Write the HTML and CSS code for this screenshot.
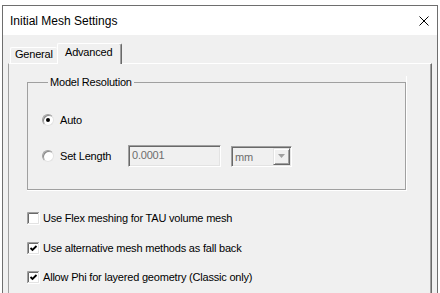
FILE: index.html
```html
<!DOCTYPE html>
<html lang="en">
<head>
    <meta charset="UTF-8">
    <title>Initial Mesh Settings</title>
    <link rel="stylesheet" href="styles.css">
</head>
<body>

    <div class="window">
        <div class="titlebar">
            <span class="title">Initial Mesh Settings</span>
            <svg class="close" width="10" height="10" viewBox="0 0 10 10">
                <path d="M0.5 0.5 L9.5 9.5 M9.5 0.5 L0.5 9.5" stroke="#000" stroke-width="1" fill="none"/>
            </svg>
        </div>

        <div class="client">
            <!-- Tabs -->
            <div class="tabs">
                <div class="tab tab-general">General</div>
                <div class="tab tab-advanced">Advanced</div>
            </div>

            <div class="panel">
                <div class="group-wrap">
                    <fieldset class="group">
                        <legend>Model Resolution</legend>
                        <div class="option">
                            <span class="radio on"></span>
                            <span class="option-label">Auto</span>
                        </div>
                        <div class="option option-length">
                            <span class="radio"></span>
                            <span class="option-label label-length">Set Length</span>
                            <div class="field">0.0001</div>
                            <div class="combo">
                                <span class="combo-text">mm</span>
                                <span class="combo-btn">
                                    <svg width="7" height="4" viewBox="0 0 7 4"><path d="M0 0 H7 L3.5 4 Z" fill="#a0a0a0"/></svg>
                                </span>
                            </div>
                        </div>
                    </fieldset>
                </div>

                <!-- Options -->
                <div class="check check-flex">
                    <svg class="box" width="13" height="13" viewBox="0 0 13 13">
                        <rect x="2" y="2" width="9" height="9" fill="#fff"/>
                        <path d="M0.5 12 V0.5 H12" stroke="#a0a0a0" fill="none"/>
                        <path d="M0.5 12.5 H12.5 V0.5" stroke="#fff" fill="none"/>
                        <path d="M1.5 11 V1.5 H11" stroke="#696969" fill="none"/>
                        <path d="M1.5 11.5 H11.5 V1.5" stroke="#e3e3e3" fill="none"/>
                    </svg>
                    <span>Use Flex meshing for TAU volume mesh</span>
                </div>
                <div class="check check-alt">
                    <svg class="box" width="13" height="13" viewBox="0 0 13 13">
                        <rect x="2" y="2" width="9" height="9" fill="#fff"/>
                        <path d="M0.5 12 V0.5 H12" stroke="#a0a0a0" fill="none"/>
                        <path d="M0.5 12.5 H12.5 V0.5" stroke="#fff" fill="none"/>
                        <path d="M1.5 11 V1.5 H11" stroke="#696969" fill="none"/>
                        <path d="M1.5 11.5 H11.5 V1.5" stroke="#e3e3e3" fill="none"/>
                        <path d="M3.5 6 L5.5 8 L9.5 4" stroke="#000" stroke-width="1.8" fill="none"/>
                    </svg>
                    <span>Use alternative mesh methods as fall back</span>
                </div>
                <div class="check check-phi">
                    <svg class="box" width="13" height="13" viewBox="0 0 13 13">
                        <rect x="2" y="2" width="9" height="9" fill="#fff"/>
                        <path d="M0.5 12 V0.5 H12" stroke="#a0a0a0" fill="none"/>
                        <path d="M0.5 12.5 H12.5 V0.5" stroke="#fff" fill="none"/>
                        <path d="M1.5 11 V1.5 H11" stroke="#696969" fill="none"/>
                        <path d="M1.5 11.5 H11.5 V1.5" stroke="#e3e3e3" fill="none"/>
                        <path d="M3.5 6 L5.5 8 L9.5 4" stroke="#000" stroke-width="1.8" fill="none"/>
                    </svg>
                    <span>Allow Phi for layered geometry (Classic only)</span>
                </div>
            </div>
        </div>
    </div>

</body>
</html>
```

FILE: styles.css
```css
/* Basic reset */
* {
    margin: 0;
    padding: 0;
    box-sizing: border-box;
}

body {
    background-color: #fff;
    font-family: "Liberation Sans", Arial, sans-serif;
    font-size: 11px;
    letter-spacing: -0.2px;
    color: #000;
    overflow: hidden;
}

/* Dialog window */
.window {
    margin: 5px 0 0 2px;
    width: 436px;
    height: 288px;
    border: 1px solid #6e6e6e;
    border-bottom: none;
    display: flex;
    flex-direction: column;
}

.titlebar {
    height: 29px;
    flex: none;
    background-color: #fff;
    display: flex;
    align-items: center;
    justify-content: space-between;
    padding: 0 8px 0 7px;
}

.title {
    font-size: 12px;
    letter-spacing: 0;
}

.client {
    flex: 1;
    background-color: #f0f0f0;
    padding: 8px 5px 0;
    display: flex;
    flex-direction: column;
}

/* Tabs */
.tabs {
    display: flex;
    align-items: flex-start;
    height: 21px;
    margin-bottom: -1px;
    padding-left: 2px;
    position: relative;
    z-index: 1;
}

.tab {
    background-color: #f0f0f0;
    border-top: 1px solid #fff;
    border-left: 1px solid #fff;
    border-radius: 2px 2px 0 0;
    line-height: 13px;
    white-space: nowrap;
}

.tab-general {
    width: 47px;
    height: 16px;
    margin-top: 4px;
    padding-left: 4px;
}

.tab-advanced {
    width: 65px;
    height: 21px;
    padding: 2px 0 0 7px;
    border-right: 1px solid #696969;
    box-shadow: inset -1px 0 0 #a0a0a0;
}

.panel {
    flex: 1;
    border-top: 1px solid #fff;
    border-left: 1px solid #a0a0a0;
    border-right: 1px solid #696969;
    box-shadow: inset -1px 0 0 #a0a0a0;
    padding: 12px 0 0 18px;
}

/* Group box */
.group-wrap {
    width: 380px;
    border-right: 1px solid #fff;
    border-bottom: 1px solid #fff;
}

.group {
    width: 379px;
    border: 1px solid #a0a0a0;
    padding: 20px 0 22px 14px;
}

.group legend {
    margin-left: 6px;
    padding: 0 2px;
    line-height: 13px;
}

.option {
    display: flex;
    align-items: center;
    height: 22px;
}

.option-length {
    margin-top: 14px;
}

.option-label {
    margin-left: 6px;
}

.label-length {
    width: 68px;
}

.radio {
    flex: none;
    width: 12px;
    height: 12px;
    border-radius: 50%;
    background-color: #fff;
    border: 1px solid;
    border-color: #a0a0a0 #e3e3e3 #e3e3e3 #a0a0a0;
    box-shadow: inset 1px 1px 0 #8a8a8a;
    display: flex;
    align-items: center;
    justify-content: center;
}

.radio.on::after {
    content: "";
    width: 4px;
    height: 4px;
    border-radius: 50%;
    background-color: #000;
}

.field {
    width: 93px;
    height: 22px;
    border: 1px solid;
    border-color: #a0a0a0 #fff #fff #a0a0a0;
    box-shadow: inset 1px 1px 0 #696969, inset -1px -1px 0 #e3e3e3;
    padding: 2px 0 0 3px;
    line-height: 15px;
    color: #6d6d6d;
}

.combo {
    width: 61px;
    height: 21px;
    margin-left: 10px;
    border: 1px solid;
    border-color: #a0a0a0 #fff #fff #a0a0a0;
    box-shadow: inset 1px 1px 0 #696969, inset -1px -1px 0 #e3e3e3;
    padding: 1px;
    display: flex;
    align-items: center;
}

.combo-text {
    flex: 1;
    padding: 2px 0 0 2px;
    color: #6d6d6d;
}

.combo-btn {
    width: 17px;
    height: 17px;
    border: 1px solid;
    border-color: #e3e3e3 #696969 #696969 #e3e3e3;
    box-shadow: inset 1px 1px 0 #fff, inset -1px -1px 0 #a0a0a0;
    background-color: #f0f0f0;
    display: flex;
    align-items: center;
    justify-content: center;
}

/* Check options */
.check {
    display: flex;
    align-items: center;
    height: 16px;
    gap: 3px;
}

.check .box {
    flex: none;
}

.check-flex {
    margin-top: 19px;
}

.check-alt {
    margin-top: 14px;
}

.check-phi {
    margin-top: 13px;
}
```
